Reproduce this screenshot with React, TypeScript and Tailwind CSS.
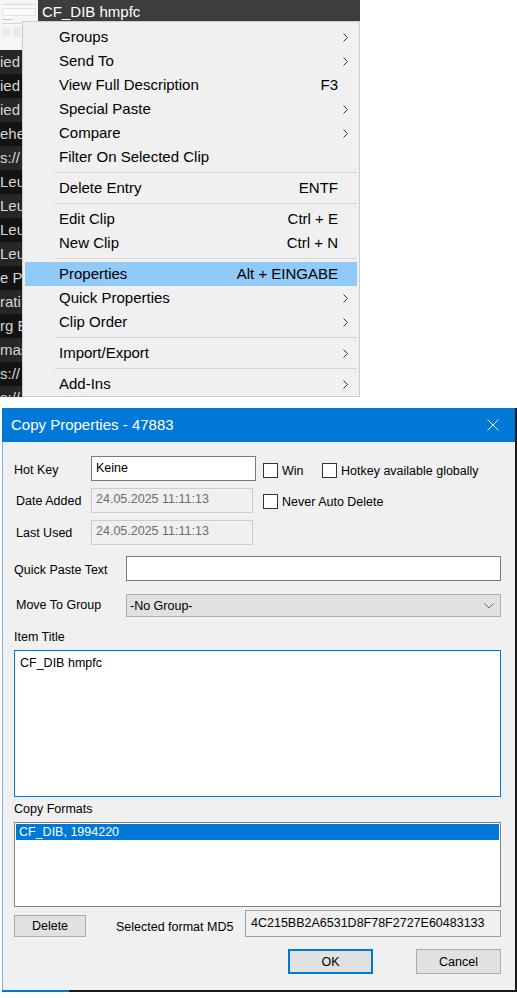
import React from 'react';

type MenuEntry = { label: string; shortcut?: string; sub?: boolean; active?: boolean } | 'sep';

const menu: MenuEntry[] = [
  { label: 'Groups', sub: true },
  { label: 'Send To', sub: true },
  { label: 'View Full Description', shortcut: 'F3' },
  { label: 'Special Paste', sub: true },
  { label: 'Compare', sub: true },
  { label: 'Filter On Selected Clip' },
  'sep',
  { label: 'Delete Entry', shortcut: 'ENTF' },
  'sep',
  { label: 'Edit Clip', shortcut: 'Ctrl + E' },
  { label: 'New Clip', shortcut: 'Ctrl + N' },
  'sep',
  { label: 'Properties', shortcut: 'Alt + EINGABE', active: true },
  { label: 'Quick Properties', sub: true },
  { label: 'Clip Order', sub: true },
  'sep',
  { label: 'Import/Export', sub: true },
  'sep',
  { label: 'Add-Ins', sub: true },
];

// clip list rows peeking out left of the menu
const rows = ['ied', 'ied', 'ied', 'ehe', 's://', 'Leut', 'Leut', 'Leut', 'Leut', 'e Po', 'rati', 'rg E', 'mas', 's://', 's://'];

function Arrow() {
  return (
    <svg width="5" height="9" viewBox="0 0 5 9" fill="none">
      <path d="M0.5 0.5 L4.5 4.5 L0.5 8.5" stroke="#333" strokeWidth="1" />
    </svg>
  );
}

function Check({ label }: { label: string }) {
  return (
    <div className="flex items-center gap-[4px]">
      <span className="w-[15px] h-[15px] border border-[#333] bg-white shrink-0" />
      <span className="whitespace-nowrap pt-[1px]">{label}</span>
    </div>
  );
}

function Thumb() {
  return (
    <div className="w-[38px] h-[50px] bg-[#f6f6f6] flex flex-col gap-[3px] pt-[4px] pl-[2px] overflow-hidden">
      <div className="h-[1px] w-[34px] bg-[#d8d8d8]" />
      <div className="h-[8px] w-[34px] bg-[#fbfbfb] border border-[#e4e4e4]" />
      <div className="h-[1px] w-[10px] bg-[#c8c8c8]" />
      <div className="h-[1px] w-[34px] bg-[#d8d8d8]" />
      <div className="flex gap-[3px]">
        <div className="h-[10px] w-[8px] bg-[#ececec]" />
        <div className="h-[10px] w-[20px] bg-[#f0e9e9]" />
      </div>
    </div>
  );
}

export default function App() {
  return (
    <div className="w-[517px] h-[998px] bg-white overflow-hidden font-['Liberation_Sans',Arial,sans-serif] text-black">
      {/* -- clip list + context menu -- */}
      <div className="relative h-[408px]">
        <div className="w-[360px] h-[397px] bg-[#1a1a1a] flex flex-col overflow-hidden">
          <div className="flex h-[50px] shrink-0">
            <Thumb />
            <div className="flex-1 flex flex-col">
              <div className="h-[21px] bg-[#3d3d3d] text-white text-[15px] leading-[19px] pt-[2px] pl-[4px]">CF_DIB hmpfc</div>
              <div className="flex-1 bg-[#262626]" />
            </div>
          </div>
          {rows.map((r, i) => (
            <div
              key={i}
              className={`h-[24px] shrink-0 text-[15px] leading-[24px] text-[#d6d6d6] whitespace-nowrap ${i % 2 === 0 ? 'bg-[#262626]' : 'bg-[#121212]'}`}
            >
              {r}
            </div>
          ))}
        </div>

        <div className="absolute left-[22px] top-[21px] w-[338px] h-[376px] bg-[#f0f0f0] border border-[#cccccc] pt-[3px] px-[2px] text-[15px]">
          {menu.map((m, i) =>
            m === 'sep' ? (
              <div key={i} className="h-[7px] flex items-center pl-[30px]">
                <div className="h-[1px] w-full bg-[#d3d3d3]" />
              </div>
            ) : (
              <div key={i} className={`h-[24px] flex items-center pl-[34px] ${m.active ? 'bg-[#91c9f7]' : ''}`}>
                <span className="flex-1 whitespace-nowrap">{m.label}</span>
                {m.shortcut && <span className="whitespace-nowrap">{m.shortcut}</span>}
                <span className="w-[19px] flex items-center pl-[5px]">{m.sub && <Arrow />}</span>
              </div>
            )
          )}
        </div>
      </div>

      {/* -- Copy Properties dialog -- */}
      <div className="ml-[2px] w-[515px] border-r-2 border-r-[#1b1b1b] text-[12.5px]">
        <div className="h-[34px] bg-[#0078d7] flex items-center pl-[9px] pr-[16px] text-white text-[15px]">
          <span className="flex-1">Copy Properties - 47883</span>
          <svg width="12" height="12" viewBox="0 0 12 12">
            <path d="M0.5 0.5 L11.5 11.5 M11.5 0.5 L0.5 11.5" stroke="#fff" strokeWidth="1" />
          </svg>
        </div>

        <div className="h-[548px] bg-[#f0f0f0] border-l border-l-[#7fb4e4] pl-[11px] pr-[14px] pt-[14px] flex flex-col">
          <div className="flex items-center h-[25px]">
            <span className="w-[77px] pt-[3px]">Hot Key</span>
            <div className="w-[165px] h-[25px] bg-white border border-[#7a7a7a] pl-[4px] pt-[1px] leading-[21px]">Keine</div>
            <div className="w-[59px] ml-[7px] pt-[4px]">
              <Check label="Win" />
            </div>
            <div className="pt-[4px]">
              <Check label="Hotkey available globally" />
            </div>
          </div>

          <div className="flex items-center h-[25px] mt-[7px]">
            <span className="w-[77px] pl-[2px] pt-[1px]">Date Added</span>
            <div className="w-[162px] h-[25px] border border-[#cccccc] pl-[4px] leading-[21px] text-[#6d6d6d]">24.05.2025 11:11:13</div>
            <div className="ml-[10px] mt-[2px]">
              <Check label="Never Auto Delete" />
            </div>
          </div>

          <div className="flex items-center h-[25px] mt-[7px]">
            <span className="w-[77px] pl-[2px] pt-[2px]">Last Used</span>
            <div className="w-[162px] h-[25px] border border-[#cccccc] pl-[4px] leading-[21px] text-[#6d6d6d]">24.05.2025 11:11:13</div>
          </div>

          <div className="flex items-center h-[25px] mt-[11px]">
            <span className="w-[112px] pt-[3px]">Quick Paste Text</span>
            <div className="flex-1 h-[25px] bg-white border border-[#7a7a7a]" />
          </div>

          <div className="flex items-center h-[23px] mt-[13px]">
            <span className="w-[112px] pl-[2px]">Move To Group</span>
            <div className="flex-1 h-[23px] bg-[#e1e1e1] border border-[#adadad] flex items-center pl-[3px] pr-[6px]">
              <span className="flex-1 pt-[2px]">-No Group-</span>
              <svg width="10" height="6" viewBox="0 0 10 6" fill="none">
                <path d="M0.5 0.5 L5 5 L9.5 0.5" stroke="#6a6a6a" strokeWidth="1" />
              </svg>
            </div>
          </div>

          <div className="mt-[13px] h-[14px] leading-[14px]">Item Title</div>
          <div className="mt-[6px] h-[147px] bg-white border border-[#0078d7] px-[5px] pt-[3px]">CF_DIB hmpfc</div>

          <div className="mt-[5px] h-[14px] leading-[14px]">Copy Formats</div>
          <div className="mt-[6px] h-[85px] bg-white border border-[#828282] p-[1px]">
            <div className="h-[16px] bg-[#0078d7] text-white pl-[3px] leading-[16px]">CF_DIB, 1994220</div>
          </div>

          <div className="mt-[3px] flex items-end h-[27px]">
            <div className="w-[72px] h-[22px] bg-[#e1e1e1] border border-[#adadad] flex items-center justify-center pt-[1px]">Delete</div>
            <div className="h-[22px] flex items-center ml-[30px] w-[129px] pt-[2px]">Selected format MD5</div>
            <div className="flex-1 h-[27px] border border-[#a0a0a0] pl-[5px] pt-[3px]">4C215BB2A6531D8F78F2727E60483133</div>
          </div>

          <div className="mt-[12px] flex justify-end gap-[43px]">
            <div className="w-[85px] h-[25px] bg-[#e1e1e1] border-2 border-[#0078d7] flex items-center justify-center pt-[2px]">OK</div>
            <div className="w-[85px] h-[25px] bg-[#e1e1e1] border border-[#adadad] flex items-center justify-center pt-[2px]">Cancel</div>
          </div>
        </div>

        <div className="flex h-[2px]">
          <div className="w-[67px] bg-[#0078d7]" />
          <div className="flex-1 bg-[#1b1b1b]" />
        </div>
      </div>
    </div>
  );
}
